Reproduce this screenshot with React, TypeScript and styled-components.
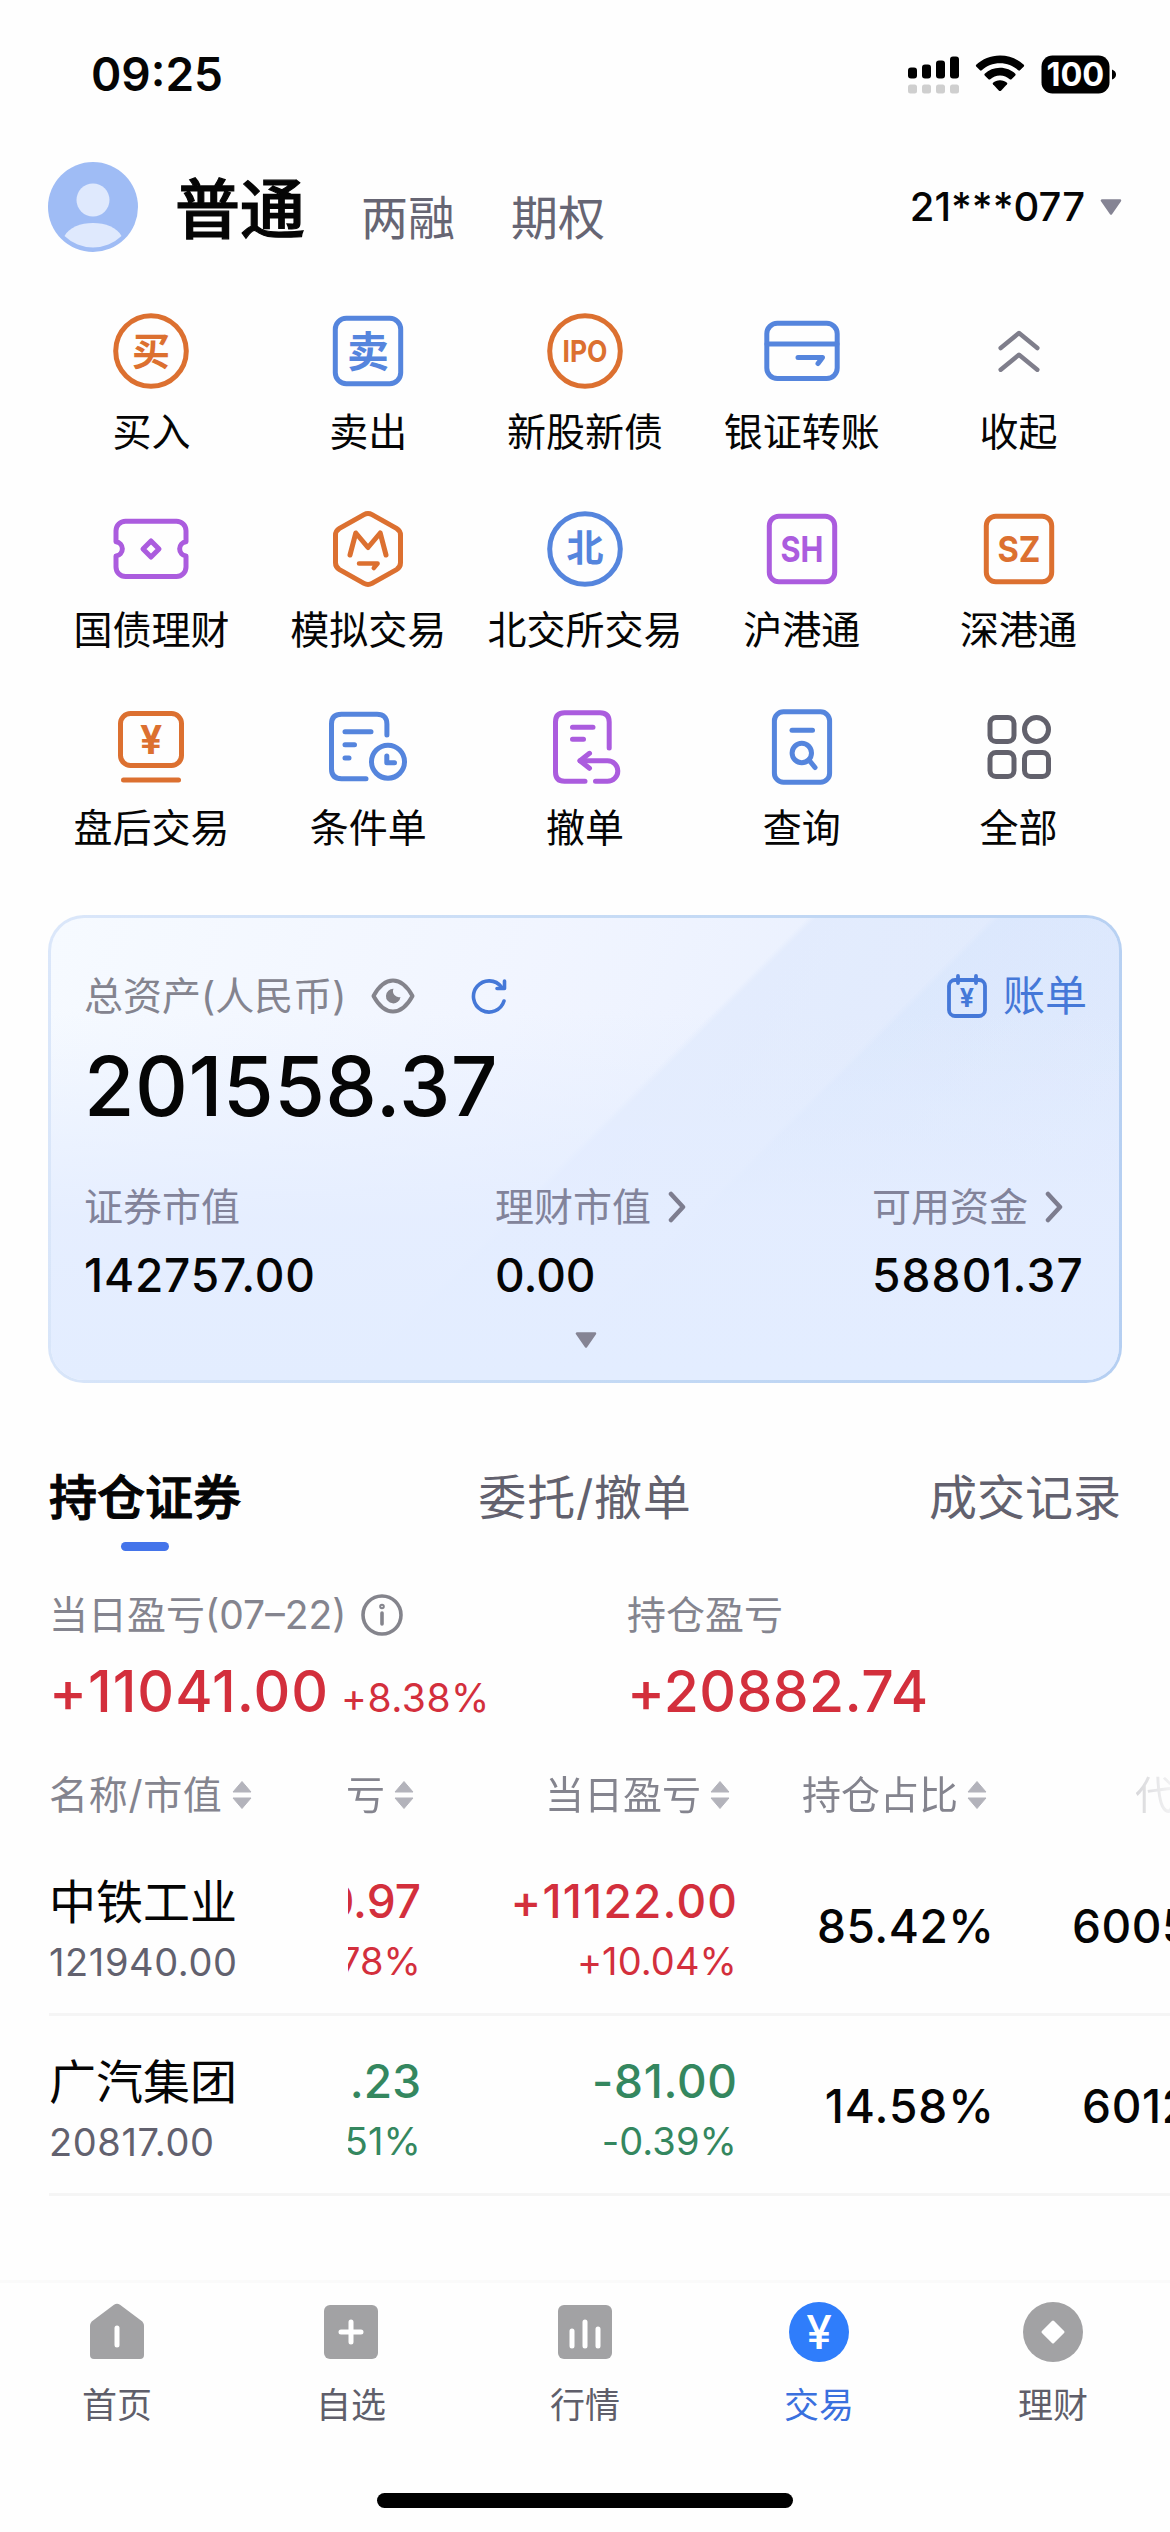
import React from "react";
import styled, { createGlobalStyle } from "styled-components";

const FONT = `Inter, "Noto Sans CJK SC", sans-serif`;
const ORANGE = "#dc7030";
const BLUE = "#5585dd";
const PURPLE = "#ab5cde";
const RED = "#d32f3c";
const GREEN = "#34875f";

const GlobalStyle = createGlobalStyle`
  * { box-sizing: border-box; }
  html, body { margin: 0; padding: 0; background: #fefefe; }
  body { font-family: ${FONT}; color: #050505; overflow: hidden; }
`;

const Screen = styled.div`
  width: 1170px;
  height: 2532px;
  display: flex;
  flex-direction: column;
  overflow: hidden;
  background: #fefefe;
`;

/* ---------- status bar ---------- */
const StatusBar = styled.div`
  height: 150px;
  padding: 0 54px 2px 91px;
  display: flex;
  align-items: center;
  justify-content: space-between;
`;
const Clock = styled.div`
  font-size: 46px;
  font-weight: 600;
  line-height: 56px;
`;
const StatusIcons = styled.svg`
  display: block;
  width: 208px;
  height: 40px;
`;

/* ---------- header ---------- */
const Header = styled.header`
  height: 114px;
  padding: 0 48px;
  display: flex;
  align-items: center;
`;
const Avatar = styled.svg`
  width: 90px;
  height: 90px;
  margin-right: 37px;
`;
const Modes = styled.nav`
  display: flex;
  align-items: flex-end;
  height: 100%;
`;
const Mode = styled.span<{ $active?: boolean }>`
  font-size: ${(p) => (p.$active ? 65 : 47)}px;
  font-weight: ${(p) => (p.$active ? 500 : 400)};
  -webkit-text-stroke: ${(p) => (p.$active ? "1.2px #050505" : "0")};
  line-height: ${(p) => (p.$active ? 80 : 60)}px;
  padding-bottom: ${(p) => (p.$active ? 14 : 16)}px;
  color: ${(p) => (p.$active ? "#050505" : "#666573")};
  margin-right: 56px;
`;
const Account = styled.div`
  margin-left: auto;
  display: flex;
  align-items: center;
  gap: 15px;
  font-size: 40px;
  font-weight: 500;
  line-height: 50px;
`;
const Triangle = styled.svg`
  display: block;
  width: 22px;
  height: 16px;
`;

/* ---------- shortcuts ---------- */
const Shortcuts = styled.section`
  margin-top: 47px;
  padding: 0 43px;
  display: grid;
  grid-template-columns: repeat(5, 1fr);
  row-gap: 52px;
`;
const Shortcut = styled.div`
  display: flex;
  flex-direction: column;
  align-items: center;
  gap: 16px;
`;
const ShortcutIcon = styled.svg`
  width: 80px;
  height: 80px;
  overflow: visible;
  fill: none;
  stroke-width: 5;
  stroke-linecap: round;
  stroke-linejoin: round;
`;
const ShortcutLabel = styled.span`
  font-size: 39px;
  line-height: 50px;
  white-space: nowrap;
`;
const Glyph = styled.text<{ $weight?: number }>`
  font-family: ${FONT};
  font-weight: ${(p) => p.$weight ?? 700};
  text-anchor: middle;
  stroke: none;
`;

/* ---------- asset card ---------- */
const Card = styled.section`
  margin: 62px 48px 0;
  height: 468px;
  border-radius: 36px;
  border: 3px solid transparent;
  padding: 46px 32px 0 33px;
  display: flex;
  flex-direction: column;
  background:
    linear-gradient(to top, #e3edff 0%, rgba(228, 237, 255, 0.9) 35%, rgba(236, 242, 255, 0) 80%) padding-box,
    linear-gradient(135deg, transparent 61.4%, rgba(211, 227, 252, 0.4) 62%, rgba(220, 232, 253, 0.1) 90%) padding-box,
    linear-gradient(135deg, transparent 49.4%, rgba(218, 230, 252, 0.5) 50%, rgba(224, 234, 253, 0.5) 100%) padding-box,
    linear-gradient(110deg, #f6faff 0%, #f1f5ff 40%, #e2ebfd 100%) padding-box,
    linear-gradient(100deg, #dbe7fa 0%, #c6dbf5 50%, #b5cff2 100%) border-box;
`;
const CardTop = styled.div`
  display: flex;
  align-items: center;
  height: 64px;
`;
const CardLabel = styled.span`
  font-size: 39px;
  line-height: 50px;
  color: #84848f;
  white-space: nowrap;
`;
const EyeIcon = styled.svg`
  width: 44px;
  height: 36px;
  margin-left: 25px;
`;
const RefreshIcon = styled.svg`
  width: 36px;
  height: 36px;
  margin-left: 56px;
`;
const Bill = styled.div`
  margin-left: auto;
  display: flex;
  align-items: center;
  gap: 16px;
  font-size: 42px;
  line-height: 54px;
  color: #4578d8;
`;
const Total = styled.div`
  font-size: 82px;
  font-weight: 500;
  line-height: 100px;
  letter-spacing: 0.5px;
  margin-top: 9px;
`;
const Breakdown = styled.div`
  margin-top: 45px;
  display: grid;
  grid-template-columns: 411px 377px 1fr;
`;
const BreakdownItem = styled.div`
  display: flex;
  flex-direction: column;
`;
const BreakdownLabel = styled.div`
  display: flex;
  align-items: center;
  gap: 17px;
  font-size: 39px;
  line-height: 50px;
  color: #82839a;
  svg { display: block; width: 18px; height: 32px; }
`;
const BreakdownValue = styled.div<{ $tracking?: number }>`
  font-size: 46px;
  font-weight: 500;
  line-height: 56px;
  letter-spacing: ${(p) => p.$tracking ?? 0}px;
  margin-top: 15px;
`;
const Expand = styled.div`
  display: flex;
  justify-content: center;
  margin-top: 29px;
`;

/* ---------- holdings ---------- */
const Tabs = styled.nav`
  margin-top: 85px;
  padding: 0 49px;
  height: 84px;
  display: flex;
  justify-content: space-between;
`;
const Tab = styled.div<{ $active?: boolean; $tracking?: number }>`
  display: flex;
  flex-direction: column;
  align-items: center;
  font-size: 48px;
  line-height: 60px;
  white-space: nowrap;
  letter-spacing: ${(p) => p.$tracking ?? 0}px;
  font-weight: ${(p) => (p.$active ? 500 : 400)};
  -webkit-text-stroke: ${(p) => (p.$active ? "1.1px #050505" : "0")};
  color: ${(p) => (p.$active ? "#050505" : "#62616e")};
`;
const Underline = styled.i`
  width: 48px;
  height: 9px;
  border-radius: 5px;
  margin-top: 14px;
  background: #4474ea;
`;
const Summary = styled.section`
  margin-top: 38px;
  padding-left: 49px;
  display: grid;
  grid-template-columns: 578px 1fr;
`;
const SummaryLabel = styled.div`
  display: flex;
  align-items: center;
  gap: 15px;
  height: 50px;
  font-size: 39px;
  line-height: 50px;
  color: #84848e;
`;
const SummaryValue = styled.div<{ $tracking: number }>`
  display: flex;
  align-items: baseline;
  gap: 12px;
  height: 70px;
  margin-top: 17px;
  font-size: 57px;
  line-height: 70px;
  font-weight: 500;
  letter-spacing: ${(p) => p.$tracking}px;
  color: ${RED};
`;
const SummaryRate = styled.span`
  font-size: 39px;
  font-weight: 400;
  letter-spacing: 0.5px;
`;

const TableHead = styled.div`
  margin: 43px 0 16px 49px;
  height: 50px;
  display: flex;
`;
const TableRow = styled.div`
  margin-left: 49px;
  height: 180px;
  display: flex;
  border-bottom: 3px solid #f5f5f5;
`;
const Frozen = styled.div`
  flex: none;
  width: 299px;
  display: flex;
  flex-direction: column;
  justify-content: center;
`;
const Scroller = styled.div<{ $fade?: boolean }>`
  flex: 1;
  min-width: 0;
  overflow: hidden;
  display: grid;
  grid-template-columns: 73px 316px 257px 255px;
  ${(p) => p.$fade && "mask-image: linear-gradient(to right, #000 85%, rgba(0, 0, 0, 0.3) 96%, transparent 102%);"}
`;
const Cell = styled.div<{ $tone?: string }>`
  display: flex;
  flex-direction: column;
  align-items: flex-end;
  justify-content: center;
  color: ${(p) => p.$tone || "#050505"};
  white-space: nowrap;
`;
const HeadCell = styled.div<{ $end?: boolean; $tracking?: number }>`
  display: flex;
  align-items: center;
  justify-content: ${(p) => (p.$end ? "flex-end" : "flex-start")};
  gap: 9px;
  padding-right: ${(p) => (p.$end ? 7 : 0)}px;
  height: 50px;
  font-size: 39px;
  line-height: 50px;
  letter-spacing: ${(p) => p.$tracking ?? 0}px;
  color: #84848e;
  white-space: nowrap;
  svg { flex: none; width: 20px; height: 30px; }
`;
const StockName = styled.div`
  font-size: 47px;
  line-height: 60px;
  padding-top: 8px;
`;
const Primary = styled.div<{ $tracking?: number; $stacked?: boolean }>`
  font-size: 46px;
  font-weight: 500;
  line-height: 60px;
  padding-top: ${(p) => (p.$stacked ? 6 : 2)}px;
  letter-spacing: ${(p) => p.$tracking ?? 0}px;
  margin-right: ${(p) => -(p.$tracking ?? 0)}px;
`;
const Secondary = styled.div<{ $muted?: boolean }>`
  font-size: 38px;
  line-height: 46px;
  margin-top: 7px;
  letter-spacing: ${(p) => (p.$muted ? 0.6 : 0.1)}px;
  color: ${(p) => (p.$muted ? "#62616e" : "inherit")};
`;

/* ---------- bottom bar ---------- */
const BottomBar = styled.footer`
  margin-top: auto;
  height: 252px;
  border-top: 3px solid #fafafa;
  display: flex;
  flex-direction: column;
  align-items: center;
`;
const NavItems = styled.div`
  width: 100%;
  display: grid;
  grid-template-columns: repeat(5, 1fr);
  padding-top: 19px;
`;
const NavItem = styled.div<{ $active?: boolean }>`
  display: flex;
  flex-direction: column;
  align-items: center;
  gap: 20px;
  font-size: 35px;
  line-height: 46px;
  color: ${(p) => (p.$active ? "#3a70de" : "#5f5e6a")};
  svg { width: 60px; height: 60px; display: block; }
`;
const HomeIndicator = styled.div`
  width: 416px;
  height: 15px;
  border-radius: 8px;
  background: #000;
  margin-top: auto;
  margin-bottom: 24px;
`;

const Down = () => (
  <Triangle viewBox="0 0 22 16">
    <path d="M2 1.5H20L11 14.5Z" fill="#858494" stroke="#858494" strokeWidth="2.5" strokeLinejoin="round" />
  </Triangle>
);
const Chevron = () => (
  <svg viewBox="0 0 18 32" fill="none" stroke="#7d7d8f" strokeWidth="4.5" strokeLinecap="round" strokeLinejoin="round">
    <path d="M3 3L15 16L3 29" />
  </svg>
);
const Sort = () => (
  <svg viewBox="0 0 20 30" fill="#b3b3bb" stroke="#b3b3bb" strokeWidth="1" strokeLinejoin="round">
    <path d="M10 1.5L19 12H1Z" />
    <path d="M10 28.5L19 18H1Z" />
  </svg>
);

const shortcuts: { label: string; color: string; art: React.ReactNode }[] = [
  { label: "买入", color: ORANGE, art: <><circle cx="40" cy="40" r="35.3" /><Glyph x="40" y="53.5" fontSize="38" fill={ORANGE}>买</Glyph></> },
  { label: "卖出", color: BLUE, art: <><rect x="7.3" y="7.3" width="65.4" height="65.4" rx="11" /><Glyph x="40" y="55.5" fontSize="42" fill={BLUE}>卖</Glyph></> },
  { label: "新股新债", color: ORANGE, art: <><circle cx="40" cy="40" r="35.3" /><Glyph x="40" y="50.8" fontSize="30" fill={ORANGE} textLength="45" lengthAdjust="spacingAndGlyphs">IPO</Glyph></> },
  { label: "银证转账", color: BLUE, art: <><rect x="4.8" y="12.3" width="70.4" height="55.2" rx="10.5" /><path d="M5 33H75M36 46.5H60.5L56 52.5" /></> },
  { label: "收起", color: "#7f7e8b", art: <path d="M21.7 37L40 22L58.3 37M21.7 58.7L40 43.7L58.3 58.7" strokeWidth="4.5" /> },
  { label: "国债理财", color: PURPLE, art: <><path d="M14.5 12.3H65.5A9.5 9.5 0 0 1 75 21.8V32.7A7.2 7.2 0 0 0 75 47V58A9.5 9.5 0 0 1 65.5 67.5H14.5A9.5 9.5 0 0 1 5 58V47A7.2 7.2 0 0 0 5 32.7V21.8A9.5 9.5 0 0 1 14.5 12.3Z" /><path d="M40 32L48 40L40 48L32 40Z" /></> },
  { label: "模拟交易", color: ORANGE, art: <><path d="M36 5.6Q40 3.4 44 5.6L68.5 19.4Q72.5 21.8 72.5 26.3V53.7Q72.5 58.2 68.5 60.6L44 74.4Q40 76.6 36 74.4L11.5 60.6Q7.5 58.2 7.5 53.7V26.3Q7.5 21.8 11.5 19.4Z" /><path d="M22 46L27.8 24L40 38.5L52.2 24L58 46" /><path d="M31 54.5H49.6L45.8 59" strokeWidth="4.5" /></> },
  { label: "北交所交易", color: BLUE, art: <><circle cx="40" cy="40" r="35.3" /><Glyph x="40" y="53" fontSize="37" fill={BLUE}>北</Glyph></> },
  { label: "沪港通", color: PURPLE, art: <><rect x="7.3" y="7.3" width="65.4" height="65.4" rx="9.5" /><Glyph x="40" y="52.8" fontSize="36" fill={PURPLE} textLength="43" lengthAdjust="spacingAndGlyphs">SH</Glyph></> },
  { label: "深港通", color: ORANGE, art: <><rect x="7.3" y="7.3" width="65.4" height="65.4" rx="9.5" /><Glyph x="40" y="52.8" fontSize="36" fill={ORANGE} textLength="43" lengthAdjust="spacingAndGlyphs">SZ</Glyph></> },
  { label: "盘后交易", color: ORANGE, art: <><rect x="9.5" y="6.5" width="61" height="52" rx="10" /><path d="M12.5 73H67.5" /><Glyph x="40" y="47" fontSize="39" fill={ORANGE}>¥</Glyph></> },
  { label: "条件单", color: BLUE, art: <><path d="M58.9 28V17Q58.9 7.3 49 7.3H13.5Q3.5 7.3 3.5 17V62Q3.5 71.7 13.5 71.7H38" /><path d="M17 24.7H43M17 37.7H26.5M17 51H21" /><circle cx="60" cy="54.7" r="16.5" /><path d="M58.8 49V55.8H66.5" /></> },
  { label: "撤单", color: PURPLE, art: <><path d="M64.2 41V15Q64.2 5.7 55 5.7H19.5Q10.5 5.7 10.5 15V65Q10.5 74.3 19.5 74.3H40" /><path d="M27.5 20.3H48M27.5 32.3H38.5" /><path d="M50.5 74.3H62.5A10.3 10.3 0 0 0 62.5 53.7H35" /><path d="M44.5 46.3L35 53.7L44.5 61.3" /></> },
  { label: "查询", color: BLUE, art: <><rect x="12.4" y="4.8" width="55.2" height="70.4" rx="9" /><path d="M30 23.3H50.5" /><circle cx="39.8" cy="46" r="9.7" /><path d="M47 53L53 60.5" /></> },
  { label: "全部", color: "#62616c", art: <><rect x="11" y="10.5" width="24" height="24" rx="6" /><circle cx="57.5" cy="22.5" r="12" /><rect x="11" y="45.5" width="24" height="24" rx="6" /><rect x="45.5" y="45.5" width="24" height="24" rx="6" /></> },
];

const holdings = [
  { name: "中铁工业", value: "121940.00", tone: RED, cut: ["0.97", "78%"], day: ["+11122.00", "+10.04%"], dayTracking: 1.2, share: "85.42%", shareTracking: 0.5, code: "600528" },
  { name: "广汽集团", value: "20817.00", tone: GREEN, cut: [".23", "51%"], day: ["-81.00", "-0.39%"], dayTracking: 0.7, share: "14.58%", shareTracking: 1, code: "601238" },
];

const GRAY = "#a2a2a4";
const navItems: { label: string; active?: boolean; icon: React.ReactNode }[] = [
  { label: "首页", icon: <><path d="M27 2.8Q30 .8 33 2.8L54 18.5Q57 20.5 57 24V53Q57 57 53 57H7Q3 57 3 53V24Q3 20.5 6 18.5Z" fill={GRAY} /><path d="M30 26V43" stroke="#fff" strokeWidth="5" strokeLinecap="round" /></> },
  { label: "自选", icon: <><rect x="3" y="3" width="54" height="54" rx="6" fill={GRAY} /><path d="M30 20V40M20 30H40" stroke="#fff" strokeWidth="5" strokeLinecap="round" /></> },
  { label: "行情", icon: <><rect x="3" y="3" width="54" height="54" rx="6" fill={GRAY} /><path d="M17 29V44M30 20V44M43 27V44" stroke="#fff" strokeWidth="5" strokeLinecap="round" /></> },
  { label: "交易", active: true, icon: <><circle cx="30" cy="30" r="30" fill="#2f7dfb" /><Glyph x="30" y="46.5" fontSize="46" fill="#fff" $weight={500}>¥</Glyph></> },
  { label: "理财", icon: <><circle cx="30" cy="30" r="30" fill={GRAY} /><path d="M30 20L40 30L30 40L20 30Z" fill="#fff" stroke="#fff" strokeWidth="3" strokeLinejoin="round" /></> },
];

export default function App() {
  return (
    <Screen>
      <GlobalStyle />
      <StatusBar>
        <Clock>09:25</Clock>
        <StatusIcons viewBox="0 0 208 40">
          <rect x="0" y="13.5" width="9" height="11" rx="3" />
          <rect x="14" y="10.5" width="9" height="14" rx="3" />
          <rect x="28" y="6.5" width="9" height="18" rx="3" />
          <rect x="42" y="2.5" width="9" height="22" rx="3" />
          {[0, 14, 28, 42].map((x) => (
            <rect key={x} x={x} y="30.5" width="9" height="9" rx="2.5" fill="#cfcfcf" />
          ))}
          <path d="M92 1.5C82.5 1.5 74.5 5 68.2 10.8Q67.5 11.6 68.2 12.5L72 16.3Q72.9 17 73.7 16.3C78.7 11.9 85 9.3 92 9.3S105.3 11.9 110.3 16.3Q111.1 17 112 16.3L115.8 12.5Q116.5 11.6 115.8 10.8C109.5 5 101.5 1.5 92 1.5Z" />
          <path d="M92 13.8C86 13.8 80.7 16.1 76.7 19.7Q75.9 20.5 76.7 21.4L80.5 25.2Q81.4 26 82.3 25.2C84.9 22.9 88.2 21.5 92 21.5S99.1 22.9 101.7 25.2Q102.6 26 103.5 25.2L107.3 21.4Q108.1 20.5 107.3 19.7C103.3 16.1 98 13.8 92 13.8Z" />
          <path d="M92 26.3C89.2 26.3 86.8 27.2 85 28.8Q84.3 29.5 85 30.3L91 36.7Q92 37.5 93 36.7L99 30.3Q99.7 29.5 99 28.8C97.2 27.2 94.8 26.3 92 26.3Z" />
          <rect x="133.5" y="1.5" width="68" height="38" rx="11" />
          <path d="M204 15.5Q208 17 208 20.5T204 25.5Z" />
          <Glyph x="167.3" y="32.2" fontSize="32.5" fill="#fff">100</Glyph>
        </StatusIcons>
      </StatusBar>

      <Header>
        <Avatar viewBox="0 0 90 90">
          <circle cx="45" cy="45" r="45" fill="#9fbcf5" />
          <circle cx="45" cy="38" r="16.5" fill="#dfe9fd" />
          <path d="M16.5 74C25 56.5 65 56.5 73.5 74A41 41 0 0 1 16.5 74Z" fill="#dfe9fd" />
        </Avatar>
        <Modes>
          <Mode $active>普通</Mode>
          <Mode>两融</Mode>
          <Mode>期权</Mode>
        </Modes>
        <Account>21***077<Down /></Account>
      </Header>

      <Shortcuts>
        {shortcuts.map((s) => (
          <Shortcut key={s.label}>
            <ShortcutIcon viewBox="0 0 80 80" stroke={s.color}>{s.art}</ShortcutIcon>
            <ShortcutLabel>{s.label}</ShortcutLabel>
          </Shortcut>
        ))}
      </Shortcuts>

      <Card>
        <CardTop>
          <CardLabel>总资产(人民币)</CardLabel>
          <EyeIcon viewBox="0 0 44 36">
            <path d="M2.5 18Q11 2.5 22 2.5T41.5 18Q33 33.5 22 33.5T2.5 18Z" fill="none" stroke="#84848c" strokeWidth="4" strokeLinejoin="round" />
            <path d="M22.5 10.8A7.3 7.3 0 1 0 29.5 19A6 6 0 0 1 22.5 10.8Z" fill="#84848c" />
          </EyeIcon>
          <RefreshIcon viewBox="0 0 36 36" fill="none" stroke="#4578d8" strokeWidth="3.6" strokeLinecap="round" strokeLinejoin="round">
            <path d="M33 23A15.6 15.6 0 1 1 30.5 9" />
            <path d="M33.5 3V10.5H26" />
          </RefreshIcon>
          <Bill>
            <svg width="40" height="44" viewBox="0 0 40 44" fill="none" stroke="#4578d8" strokeWidth="3.8" strokeLinecap="round">
              <rect x="2" y="6" width="36" height="36" rx="6" />
              <path d="M11 2V9M29 2V9" />
              <Glyph x="20" y="33" fontSize="25" fill="#4578d8">¥</Glyph>
            </svg>
            账单
          </Bill>
        </CardTop>
        <Total>201558.37</Total>
        <Breakdown>
          <BreakdownItem>
            <BreakdownLabel>证券市值</BreakdownLabel>
            <BreakdownValue $tracking={0.8}>142757.00</BreakdownValue>
          </BreakdownItem>
          <BreakdownItem>
            <BreakdownLabel>理财市值<Chevron /></BreakdownLabel>
            <BreakdownValue>0.00</BreakdownValue>
          </BreakdownItem>
          <BreakdownItem>
            <BreakdownLabel>可用资金<Chevron /></BreakdownLabel>
            <BreakdownValue $tracking={1.1}>58801.37</BreakdownValue>
          </BreakdownItem>
        </Breakdown>
        <Expand><Down /></Expand>
      </Card>

      <Tabs>
        <Tab $active>持仓证券<Underline /></Tab>
        <Tab $tracking={0.8}>委托/撤单</Tab>
        <Tab>成交记录</Tab>
      </Tabs>

      <Summary>
        <div>
          <SummaryLabel>
            当日盈亏(07–22)
            <svg width="42" height="42" viewBox="0 0 42 42" fill="none" stroke="#84848c" strokeWidth="3.6" strokeLinecap="round">
              <circle cx="21" cy="21" r="19" />
              <path d="M21 19V30" />
              <circle cx="21" cy="12.5" r="1" />
            </svg>
          </SummaryLabel>
          <SummaryValue $tracking={1}>+11041.00<SummaryRate>+8.38%</SummaryRate></SummaryValue>
        </div>
        <div>
          <SummaryLabel>持仓盈亏</SummaryLabel>
          <SummaryValue $tracking={0.4}>+20882.74</SummaryValue>
        </div>
      </Summary>

      <TableHead>
        <Frozen><HeadCell $tracking={0.7}>名称/市值<Sort /></HeadCell></Frozen>
        <Scroller $fade>
          <HeadCell $end>亏<Sort /></HeadCell>
          <HeadCell $end>当日盈亏<Sort /></HeadCell>
          <HeadCell $end>持仓占比<Sort /></HeadCell>
          <HeadCell $end>代码<Sort /></HeadCell>
        </Scroller>
      </TableHead>
      {holdings.map((h) => (
        <TableRow key={h.name}>
          <Frozen>
            <StockName>{h.name}</StockName>
            <Secondary $muted>{h.value}</Secondary>
          </Frozen>
          <Scroller>
            <Cell $tone={h.tone}><Primary $stacked>{h.cut[0]}</Primary><Secondary>{h.cut[1]}</Secondary></Cell>
            <Cell $tone={h.tone}><Primary $stacked $tracking={h.dayTracking}>{h.day[0]}</Primary><Secondary>{h.day[1]}</Secondary></Cell>
            <Cell><Primary $tracking={h.shareTracking}>{h.share}</Primary></Cell>
            <Cell><Primary $tracking={0.6}>{h.code}</Primary></Cell>
          </Scroller>
        </TableRow>
      ))}

      <BottomBar>
        <NavItems>
          {navItems.map((n) => (
            <NavItem key={n.label} $active={n.active}>
              <svg viewBox="0 0 60 60">{n.icon}</svg>
              {n.label}
            </NavItem>
          ))}
        </NavItems>
        <HomeIndicator />
      </BottomBar>
    </Screen>
  );
}
